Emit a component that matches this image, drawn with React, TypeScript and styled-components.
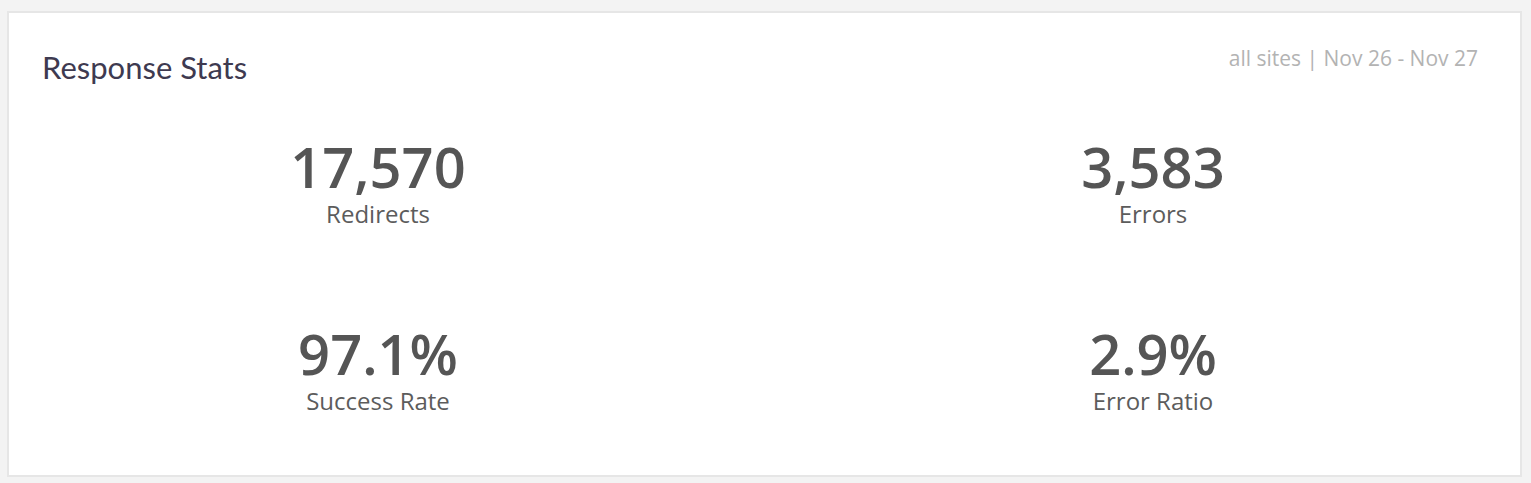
import React from "react";
import styled, { createGlobalStyle } from "styled-components";

const GlobalStyle = createGlobalStyle`
  html, body {
    margin: 0;
    padding: 0;
    background: #f3f3f3;
  }
  body {
    font-family: "Open Sans", "Liberation Sans", sans-serif;
  }
`;

const Page = styled.div`
  padding: 11px 9px 6px 7px;
`;

const Card = styled.section`
  background: #ffffff;
  border: 2px solid #e6e6e6;
  box-sizing: border-box;
  height: 466px;
  display: flex;
  flex-direction: column;
`;

const Header = styled.header`
  display: flex;
  justify-content: space-between;
  align-items: flex-start;
  padding: 32px 42px 0 33px;
`;

const Title = styled.h2`
  margin: 0;
  font-family: Lato, "Noto Sans", sans-serif;
  font-weight: 400;
  font-size: 31px;
  line-height: 44px;
  color: #3e3a50;
`;

const Meta = styled.div`
  font-family: "Open Sans", sans-serif;
  font-size: 21px;
  line-height: 27px;
  color: #b3b3b3;
`;

const Grid = styled.div`
  display: grid;
  grid-template-columns: 738px 738px;
  column-gap: 37px;
  row-gap: 93px;
  margin-top: 47px;
`;

const Stat = styled.div`
  display: flex;
  flex-direction: column;
  align-items: center;
  color: #555555;
`;

const Value = styled.div`
  font-size: 56px;
  line-height: 60px;
  font-weight: 600;
  color: #555555;
`;

const Label = styled.div`
  margin-top: 2px;
  font-size: 24px;
  line-height: 32px;
  color: #5c5c5c;
`;

const stats = [
  { value: "17,570", label: "Redirects" },
  { value: "3,583", label: "Errors" },
  { value: "97.1%", label: "Success Rate" },
  { value: "2.9%", label: "Error Ratio" },
];

export default function App() {
  return (
    <>
      <GlobalStyle />
      <Page>
        <Card>
          <Header>
            <Title>Response Stats</Title>
            <Meta>all sites | Nov 26 - Nov 27</Meta>
          </Header>
          <Grid>
            {stats.map((s) => (
              <Stat key={s.label}>
                <Value>{s.value}</Value>
                <Label>{s.label}</Label>
              </Stat>
            ))}
          </Grid>
        </Card>
      </Page>
    </>
  );
}
